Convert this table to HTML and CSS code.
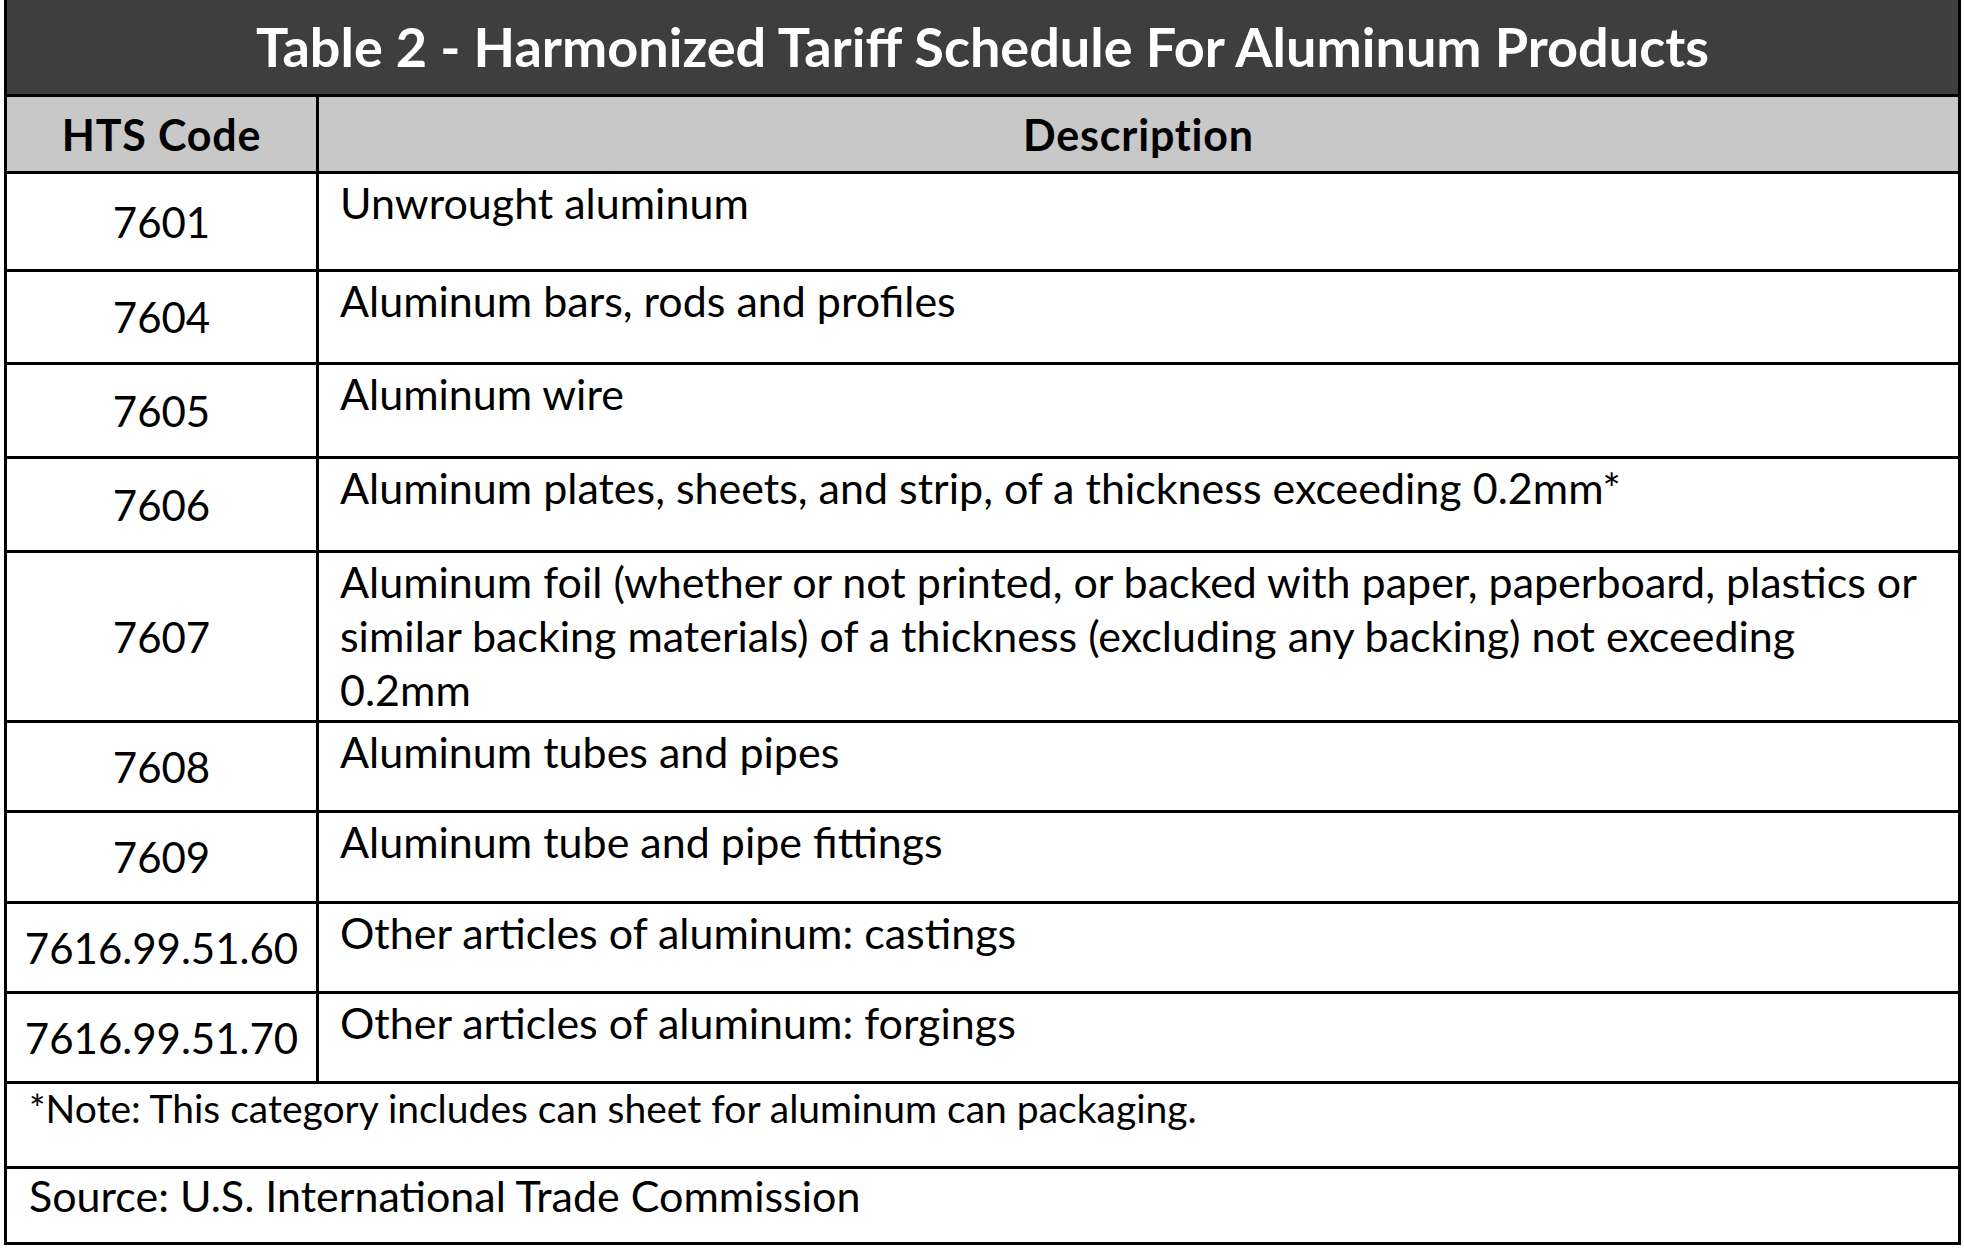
FILE: index.html
```html
<!DOCTYPE html>
<html lang="en">
<head>
<meta charset="utf-8">
<title>Table 2 - Harmonized Tariff Schedule For Aluminum Products</title>
<link rel="stylesheet" href="styles.css">
</head>
<body>
<table class="tariff">
  <colgroup>
    <col class="col-code">
    <col class="col-desc">
  </colgroup>
  <thead>
    <tr class="title-row"><th colspan="2">Table 2 - Harmonized Tariff Schedule For Aluminum Products</th></tr>
    <tr class="head-row"><th>HTS Code</th><th>Description</th></tr>
  </thead>
  <tbody>
    <tr class="h98"><td class="code">7601</td><td class="desc">Unwrought aluminum</td></tr>
    <tr class="h93"><td class="code">7604</td><td class="desc">Aluminum bars, rods and profiles</td></tr>
    <tr class="h94"><td class="code">7605</td><td class="desc">Aluminum wire</td></tr>
    <tr class="h94"><td class="code">7606</td><td class="desc">Aluminum plates, sheets, and strip, of a thickness exceeding 0.2mm*</td></tr>
    <tr class="h171"><td class="code">7607</td><td class="desc">Aluminum foil (whether or not printed, or backed with paper, paperboard, plastics or<br>similar backing materials) of a thickness (excluding any backing) not exceeding<br>0.2mm</td></tr>
    <tr class="h90"><td class="code">7608</td><td class="desc">Aluminum tubes and pipes</td></tr>
    <tr class="h91"><td class="code">7609</td><td class="desc">Aluminum tube and pipe fittings</td></tr>
    <tr class="h90"><td class="code">7616.99.51.60</td><td class="desc">Other articles of aluminum: castings</td></tr>
    <tr class="h90"><td class="code">7616.99.51.70</td><td class="desc">Other articles of aluminum: forgings</td></tr>
  </tbody>
  <tfoot>
    <tr class="note-row"><td colspan="2">*Note: This category includes can sheet for aluminum can packaging.</td></tr>
    <tr class="source-row"><td colspan="2">Source: U.S. International Trade Commission</td></tr>
  </tfoot>
</table>
</body>
</html>
```
FILE: styles.css
```css
html, body {
  margin: 0;
  padding: 0;
  background: #ffffff;
}

body {
  font-family: Lato, "Open Sans", "Liberation Sans", sans-serif;
  color: #000000;
}

.tariff {
  border-collapse: collapse;
  table-layout: fixed;
  width: 1957px;
  margin: 0 0 0 4px;
  font-size: 43px;
  line-height: 54px;
}

.col-code { width: 312px; }

.tariff th,
.tariff td {
  border: 3px solid #000000;
  padding: 0;
}

.tariff .title-row th {
  height: 94px;
  background: #3e3e3e;
  color: #ffffff;
  font-size: 54px;
  font-weight: 700;
  text-align: center;
  vertical-align: middle;
  border-top-width: 0;
}

.tariff .head-row th {
  height: 72px;
  background: #c8c8c8;
  font-size: 43px;
  letter-spacing: 0.8px;
  font-weight: 700;
  text-align: center;
  vertical-align: middle;
  padding-top: 2px;
}

.tariff .code {
  font-size: 42px;
  text-align: center;
  vertical-align: middle;
}

.tariff .desc {
  text-align: left;
  vertical-align: top;
  padding: 2px 0 0 21px;
}

.h98 td { height: 93px; }
.h93 td { height: 88px; }
.h94 td { height: 89px; }
.h171 td { height: 165px; }
.h90 td { height: 85px; }
.h91 td { height: 86px; }

.tariff .note-row td {
  height: 80px;
  font-size: 39px;
  line-height: 44px;
  vertical-align: top;
  padding: 2px 0 0 22px;
}

.tariff .source-row td {
  height: 73px;
  font-size: 43px;
  vertical-align: top;
  padding: 0 0 0 22px;
}
```
